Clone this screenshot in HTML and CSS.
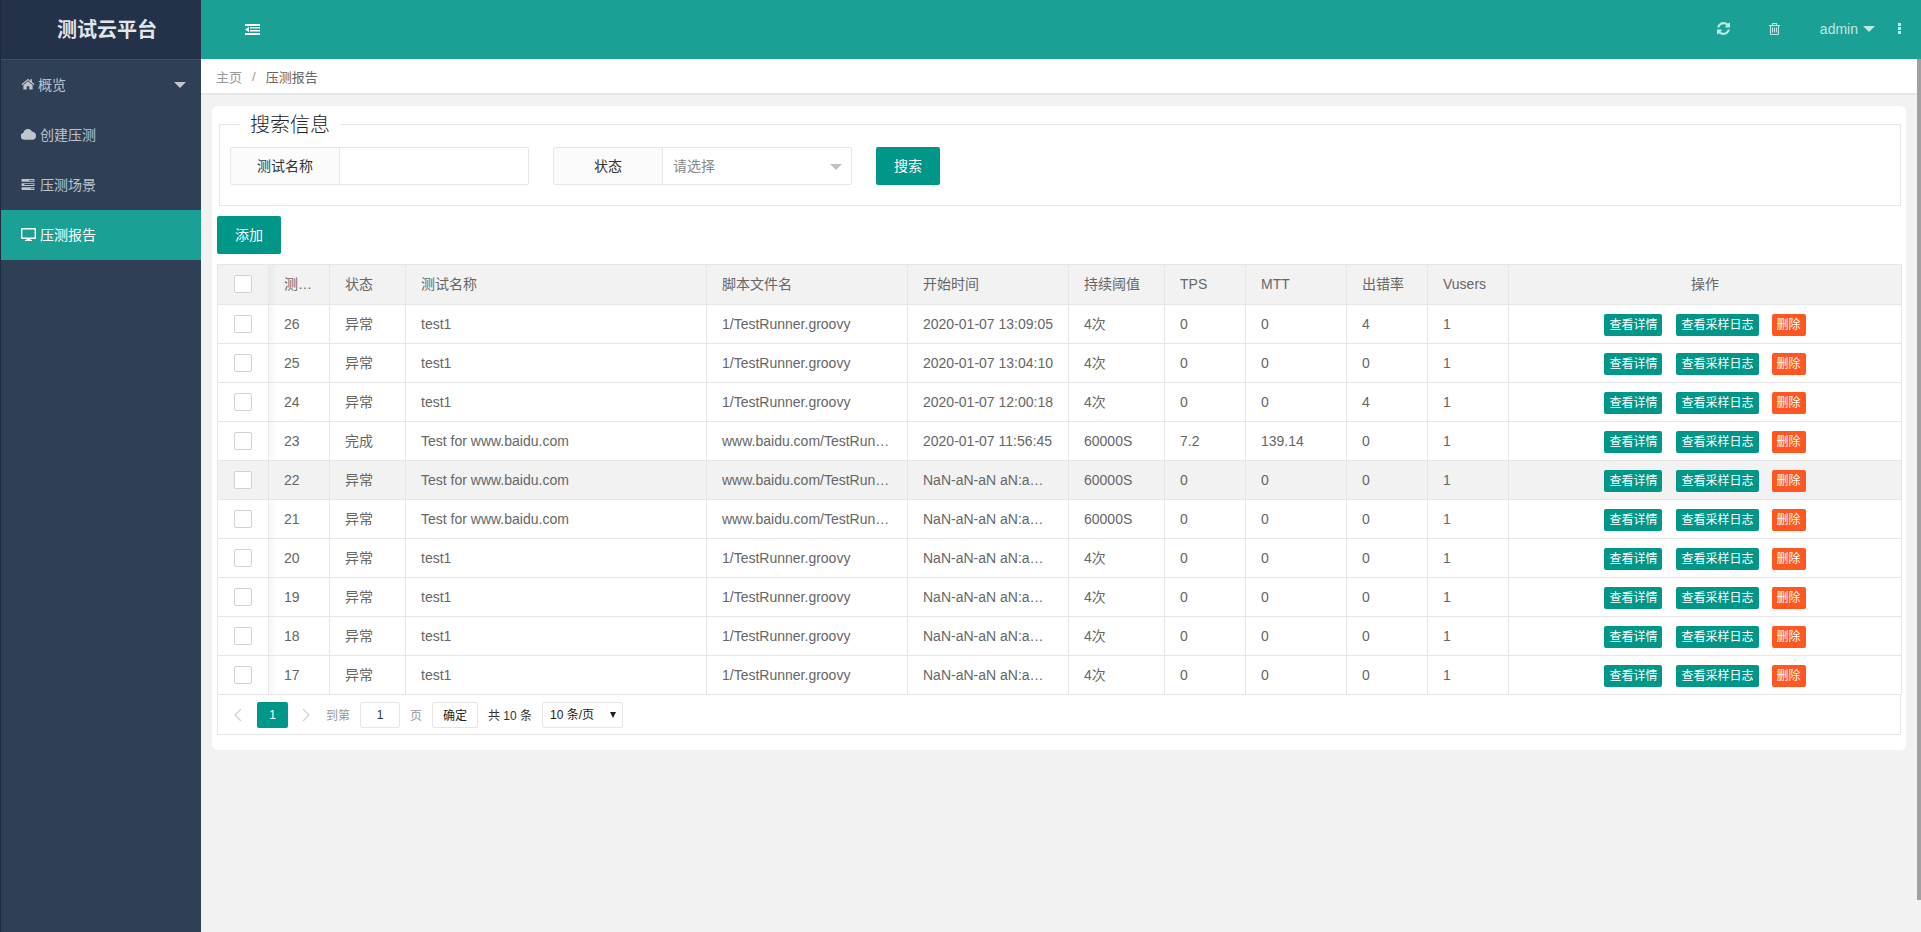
FILE: index.html
```html
<!DOCTYPE html>
<html lang="zh-CN">
<head>
<meta charset="utf-8">
<title>测试云平台</title>
<link rel="stylesheet" href="styles.css">
</head>
<body>
<div class="app">
  <aside class="sidebar">
    <div class="logo">测试云平台</div>
    <nav class="menu">
      <a class="menu-item">
        <svg class="mi mi-home" viewBox="0 0 16 14"><path d="M8 .8.4 7.4l.9 1L8 2.6l6.7 5.8.9-1-3-2.6V1.4h-2v2.2z"/><path d="M8 3.9 2.6 8.6v4.9h3.9V9.6h3v3.9h3.9V8.6z"/></svg>
        <span class="mt-home">概览</span>
        <i class="menu-caret"></i>
      </a>
      <a class="menu-item">
        <svg class="mi mi-wide" viewBox="0.4 0.5 15.200 11.200"><path d="M3.8 11.5A3.6 3.6 0 0 1 2.9 4.4 4.6 4.6 0 0 1 11.500 3 3.2 3.2 0 0 1 12.200 3.400 4.100 4.100 0 0 1 12 11.500z"/></svg>
        <span class="mt-wide">创建压测</span>
      </a>
      <a class="menu-item">
        <svg class="mi mi-bars" viewBox="0 0 14 12"><path d="M0 0h14v3H0zM0 4.500h14v3H0zM0 9h14v3H0z"/><path class="notch" d="M8 1h5v1H8zM3 5.500h10v1H3zM10 10h3v1h-3z"/></svg>
        <span class="mt-bars">压测场景</span>
      </a>
      <a class="menu-item active">
        <svg class="mi mi-wide" viewBox="0 0 15 13"><path fill-rule="evenodd" d="M1 0h13a1 1 0 0 1 1 1v9a1 1 0 0 1-1 1H9.500v1h1.500v1H4v-1h1.500v-1H1a1 1 0 0 1-1-1V1a1 1 0 0 1 1-1zm.4 1.400v8.200h12.200V1.400z"/></svg>
        <span class="mt-wide">压测报告</span>
      </a>
    </nav>
  </aside>

  <div class="main">
    <header class="topbar">
      <svg class="tb-outdent" viewBox="0 0 15 11"><path d="M0 0h15v2H0zM5 3h10v1.600H5zM5 6h10v1.600H5zM0 9h15v2H0zM4 2.800v5.400L0 5.500z"/></svg>
      <div class="tb-right">
        <svg class="tb-refresh" viewBox="0 0 1536 1536"><path d="M1511 928q0 5-1 7-64 268-268 434.500t-478 166.500q-146 0-282.500-55t-243.500-157l-129 129q-19 19-45 19t-45-19-19-45v-448q0-26 19-45t45-19h448q26 0 45 19t19 45-19 45l-137 137q71 66 161 102t187 36q134 0 250-65t186-179q11-17 53-117 8-23 30-23h192q13 0 22.500 9.500t9.500 22.500zm25-800v448q0 26-19 45t-45 19h-448q-26 0-45-19t-19-45 19-45l138-138q-148-137-349-137-134 0-250 65t-186 179q-11 17-53 117-8 23-30 23h-199q-13 0-22.500-9.500t-9.500-22.500v-7q65-268 270-434.500t480-166.500q146 0 284 55.500t245 156.500l130-129q19-19 45-19t45 19 19 45z"/></svg>
        <svg class="tb-trash" viewBox="0 0 11 12"><path d="M0 2.500h11M3.500 2.500V.5h4v2M1.500 2.500v8.200a.8.8 0 0 0 .8.800h6.400a.8.8 0 0 0 .8-.8V2.500M3.500 4.500v5M5.500 4.500v5M7.500 4.500v5"/></svg>
        <span class="tb-user">admin</span>
        <i class="tb-caret"></i>
        <span class="tb-kebab"><i></i><i></i><i></i></span>
      </div>
    </header>

    <div class="body-row">
      <div class="page">
        <div class="crumbs">
          <span class="crumb-link">主页</span>
          <span class="crumb-sep">/</span>
          <span class="crumb-now">压测报告</span>
        </div>
        <div class="content">
          <section class="card">
            <fieldset class="search">
              <legend>搜索信息</legend>
              <div class="search-row">
                <div class="field">
                  <label class="field-label">测试名称</label>
                  <input class="field-input" type="text">
                </div>
                <div class="field">
                  <label class="field-label">状态</label>
                  <div class="field-select">请选择<i class="select-tri"></i></div>
                </div>
                <button class="btn">搜索</button>
              </div>
            </fieldset>

            <button class="btn btn-add">添加</button>

            <table class="grid">
              <colgroup>
                <col class="c1"><col class="c2"><col class="c3"><col class="c4"><col class="c5"><col class="c6"><col class="c7"><col class="c8"><col class="c9"><col class="c10"><col class="c11"><col class="c12">
              </colgroup>
              <thead>
                <tr>
                  <th class="chk"><span class="box"></span></th>
                  <th class="sh">测试ID</th><th>状态</th><th>测试名称</th><th>脚本文件名</th><th>开始时间</th><th>持续阈值</th><th>TPS</th><th>MTT</th><th>出错率</th><th>Vusers</th><th class="ops">操作</th>
                </tr>
              </thead>
              <tbody>
                <tr><td class="chk"><span class="box"></span></td><td class="sh">26</td><td>异常</td><td>test1</td><td>1/TestRunner.groovy</td><td>2020-01-07 13:09:05</td><td>4次</td><td>0</td><td>0</td><td>4</td><td>1</td><td class="ops"><a class="xs">查看详情</a><a class="xs">查看采样日志</a><a class="xs xs-danger">删除</a></td></tr>
                <tr><td class="chk"><span class="box"></span></td><td class="sh">25</td><td>异常</td><td>test1</td><td>1/TestRunner.groovy</td><td>2020-01-07 13:04:10</td><td>4次</td><td>0</td><td>0</td><td>0</td><td>1</td><td class="ops"><a class="xs">查看详情</a><a class="xs">查看采样日志</a><a class="xs xs-danger">删除</a></td></tr>
                <tr><td class="chk"><span class="box"></span></td><td class="sh">24</td><td>异常</td><td>test1</td><td>1/TestRunner.groovy</td><td>2020-01-07 12:00:18</td><td>4次</td><td>0</td><td>0</td><td>4</td><td>1</td><td class="ops"><a class="xs">查看详情</a><a class="xs">查看采样日志</a><a class="xs xs-danger">删除</a></td></tr>
                <tr><td class="chk"><span class="box"></span></td><td class="sh">23</td><td>完成</td><td>Test for www.baidu.com</td><td>www.baidu.com/TestRunner.groovy</td><td>2020-01-07 11:56:45</td><td>60000S</td><td>7.2</td><td>139.14</td><td>0</td><td>1</td><td class="ops"><a class="xs">查看详情</a><a class="xs">查看采样日志</a><a class="xs xs-danger">删除</a></td></tr>
                <tr class="hover"><td class="chk"><span class="box"></span></td><td class="sh">22</td><td>异常</td><td>Test for www.baidu.com</td><td>www.baidu.com/TestRunner.groovy</td><td>NaN-aN-aN aN:aN:aN</td><td>60000S</td><td>0</td><td>0</td><td>0</td><td>1</td><td class="ops"><a class="xs">查看详情</a><a class="xs">查看采样日志</a><a class="xs xs-danger">删除</a></td></tr>
                <tr><td class="chk"><span class="box"></span></td><td class="sh">21</td><td>异常</td><td>Test for www.baidu.com</td><td>www.baidu.com/TestRunner.groovy</td><td>NaN-aN-aN aN:aN:aN</td><td>60000S</td><td>0</td><td>0</td><td>0</td><td>1</td><td class="ops"><a class="xs">查看详情</a><a class="xs">查看采样日志</a><a class="xs xs-danger">删除</a></td></tr>
                <tr><td class="chk"><span class="box"></span></td><td class="sh">20</td><td>异常</td><td>test1</td><td>1/TestRunner.groovy</td><td>NaN-aN-aN aN:aN:aN</td><td>4次</td><td>0</td><td>0</td><td>0</td><td>1</td><td class="ops"><a class="xs">查看详情</a><a class="xs">查看采样日志</a><a class="xs xs-danger">删除</a></td></tr>
                <tr><td class="chk"><span class="box"></span></td><td class="sh">19</td><td>异常</td><td>test1</td><td>1/TestRunner.groovy</td><td>NaN-aN-aN aN:aN:aN</td><td>4次</td><td>0</td><td>0</td><td>0</td><td>1</td><td class="ops"><a class="xs">查看详情</a><a class="xs">查看采样日志</a><a class="xs xs-danger">删除</a></td></tr>
                <tr><td class="chk"><span class="box"></span></td><td class="sh">18</td><td>异常</td><td>test1</td><td>1/TestRunner.groovy</td><td>NaN-aN-aN aN:aN:aN</td><td>4次</td><td>0</td><td>0</td><td>0</td><td>1</td><td class="ops"><a class="xs">查看详情</a><a class="xs">查看采样日志</a><a class="xs xs-danger">删除</a></td></tr>
                <tr><td class="chk"><span class="box"></span></td><td class="sh">17</td><td>异常</td><td>test1</td><td>1/TestRunner.groovy</td><td>NaN-aN-aN aN:aN:aN</td><td>4次</td><td>0</td><td>0</td><td>0</td><td>1</td><td class="ops"><a class="xs">查看详情</a><a class="xs">查看采样日志</a><a class="xs xs-danger">删除</a></td></tr>
              </tbody>
            </table>

            <div class="pager">
              <svg class="pg-arrow pg-prev" viewBox="0 0 9 14"><path d="M8 1 2 7l6 6"/></svg>
              <span class="pg-cur">1</span>
              <svg class="pg-arrow pg-next" viewBox="0 0 9 14"><path d="m1 1 6 6-6 6"/></svg>
              <span class="pg-text pg-goto">到第</span>
              <input class="pg-input" type="text" value="1">
              <span class="pg-text pg-unit">页</span>
              <button class="pg-ok">确定</button>
              <span class="pg-count">共 10 条</span>
              <span class="pg-size-wrap">
                <select class="pg-size"><option>10 条/页</option><option>20 条/页</option></select>
              </span>
            </div>
          </section>
        </div>
      </div>
      <div class="scroll-rail"><div class="scroll-thumb"></div></div>
    </div>
  </div>
</div>
</body>
</html>
```

FILE: styles.css
```css
* { box-sizing: border-box; }
html, body { margin: 0; padding: 0; height: 100%; overflow: hidden; }
body {
  font-family: "Liberation Sans", "Noto Sans CJK SC", sans-serif;
  font-size: 14px;
  color: #666;
  background: #f2f2f2;
}
.app { display: flex; height: 932px; width: 1921px; }

/* sidebar */
.sidebar {
  width: 201px;
  flex: none;
  background: #2f4056;
  border-left: 1px solid #1f2b3d;
}
.logo {
  height: 60px;
  line-height: 61px;
  padding-left: 56px;
  font-size: 20px;
  font-weight: 700;
  color: #e2e5ea;
  background: #233249;
  border-bottom: 1px solid #424f63;
}
.menu { display: flex; flex-direction: column; }
.menu-item {
  position: relative;
  display: flex;
  align-items: center;
  height: 50px;
  padding-left: 20px;
  padding-bottom: 2px;
  color: rgba(255, 255, 255, .7);
}
.menu-item svg { fill: currentColor; flex: none; }
.menu-item .notch { fill: #2f4056; }
.menu-item.active { background: #1aa094; color: #fff; }
.mi-home { width: 14px; height: 12px; margin-right: 3px; }
.mi-wide { width: 15px; height: 13px; margin-right: 4px; }
.mi-bars { width: 14px; height: 11px; margin-right: 4px; }
.mt-bars { margin-left: 1px; }
.menu-caret {
  position: absolute;
  left: 173px;
  top: 22px;
  border-style: solid;
  border-width: 6px 6px 0;
  border-color: rgba(255, 255, 255, .7) transparent transparent;
}

/* main */
.main { flex: 1; min-width: 0; display: flex; flex-direction: column; }
.topbar {
  height: 59px;
  flex: none;
  display: flex;
  align-items: center;
  background: #1aa094;
  color: rgba(255, 255, 255, .75);
}
.tb-outdent { width: 15px; height: 11px; margin-left: 44px; fill: #fff; }
.tb-right { margin-left: auto; display: flex; align-items: center; padding: 0 20px 2px 0; }
.tb-refresh { width: 13px; height: 13px; fill: currentColor; }
.tb-trash { width: 11px; height: 12px; margin-left: 39px; fill: none; stroke: currentColor; stroke-width: 1.1; }
.tb-user { margin-left: 40px; }
.tb-caret {
  margin-left: 5px;
  border-style: solid;
  border-width: 6px 6px 0;
  border-color: rgba(255, 255, 255, .75) transparent transparent;
}
.tb-kebab { margin-left: 23px; display: flex; flex-direction: column; gap: 1px; }
.tb-kebab i { display: block; width: 3px; height: 3px; background: rgba(255, 255, 255, .75); }

.body-row { flex: 1; display: flex; min-height: 0; }
.page { flex: 1; min-width: 0; display: flex; flex-direction: column; }
.scroll-rail { width: 4px; flex: none; }
.scroll-thumb { height: 841px; background: #a0a0a3; }

.crumbs {
  height: 36px;
  flex: none;
  display: flex;
  align-items: center;
  padding-left: 15px;
  font-size: 13px;
  background: #fff;
  border-bottom: 2px solid #e6e6e6;
}
.crumb-link { color: #999; }
.crumb-sep { color: #999; margin: 0 10px; }
.crumb-now { color: #666; }

.content { flex: 1; padding: 11px 11px 0 11px; }
.card {
  background: #fff;
  border-radius: 6px;
  padding: 4px 5px 15px;
}

/* search */
.search {
  margin: 0 0 0 2px;
  padding: 9px 10px 20px;
  border: 1px solid #e6e6e6;
  min-width: 0;
}
.search legend {
  margin-left: 10px;
  padding: 2px 10px 0;
  font-size: 20px;
  line-height: 26px;
  font-weight: 300;
  color: #222;
}
.search-row { display: flex; gap: 24px; }
.field { display: flex; width: 299px; height: 38px; }
.field-label {
  width: 110px;
  flex: none;
  line-height: 36px;
  text-align: center;
  color: #333;
  background: #fbfbfb;
  border: 1px solid #e6e6e6;
  border-radius: 2px 0 0 2px;
}
.field-input, .field-select {
  flex: 1;
  min-width: 0;
  height: 38px;
  margin: 0 0 0 -1px;
  padding: 0 10px;
  border: 1px solid #e6e6e6;
  border-radius: 0 2px 2px 0;
  background: #fff;
  outline: 0;
}
.field-select { position: relative; line-height: 36px; color: #888; }
.select-tri {
  position: absolute;
  right: 9px;
  top: 16px;
  border-style: solid;
  border-width: 6px 6px 0;
  border-color: #c2c2c2 transparent transparent;
}
.btn {
  display: block;
  width: 64px;
  height: 38px;
  padding: 0;
  border: 0;
  border-radius: 2px;
  background: #009688;
  color: #fff;
  font: inherit;
  line-height: 38px;
  text-align: center;
}
.btn-add { margin-top: 10px; }

/* table */
.grid {
  width: 1684px;
  margin-top: 10px;
  table-layout: fixed;
  border-collapse: collapse;
  background: #fff;
}
.c1 { width: 51px; } .c2 { width: 61px; } .c3 { width: 76px; } .c4 { width: 301px; }
.c5 { width: 201px; } .c6 { width: 161px; } .c7 { width: 96px; } .c8 { width: 81px; }
.c9 { width: 101px; } .c10 { width: 81px; } .c11 { width: 81px; } .c12 { width: 393px; }
.grid th, .grid td {
  height: 39px;
  padding: 0 15px;
  border: 1px solid #e6e6e6;
  line-height: 20px;
  font-weight: 400;
  color: #666;
  text-align: left;
  white-space: nowrap;
  overflow: hidden;
  text-overflow: ellipsis;
}
.grid th { height: 40px; padding-bottom: 2px; background: #f2f2f2; }
.grid .hover td { background: #f2f2f2; }
.grid .sh { background-image: linear-gradient(90deg, rgba(0, 0, 0, .035), rgba(0, 0, 0, 0) 7px); }
.grid .chk { padding: 0 0 0 16px; text-overflow: clip; }
.grid th.chk { padding-bottom: 2px; }
.grid .ops { text-align: center; padding: 0 0 2px; }
.grid td.ops { padding: 2px 0 0; }
.box {
  display: block;
  width: 18px;
  height: 18px;
  background: #fff;
  border: 1px solid #d2d2d2;
  border-radius: 2px;
}
.xs {
  display: inline-block;
  height: 22px;
  line-height: 22px;
  padding: 0 5px;
  margin-left: 14px;
  font-size: 12px;
  color: #fff;
  background: #009688;
  border-radius: 2px;
  vertical-align: middle;
}
.xs:first-child { margin-left: 0; }
.xs-danger { background: #ff5722; margin-left: 13px; }

/* pager */
.pager {
  display: flex;
  align-items: center;
  width: 1684px;
  height: 40px;
  font-size: 12px;
  border: 1px solid #e6e6e6;
  border-top: 0;
}
.pg-arrow { width: 9px; height: 14px; fill: none; stroke: #d2d2d2; stroke-width: 1.3; flex: none; }
.pg-prev { margin-left: 15px; }
.pg-next { margin-left: 14px; }
.pg-cur {
  width: 31px;
  height: 26px;
  margin-left: 15px;
  line-height: 26px;
  text-align: center;
  color: #fff;
  background: #009688;
  border-radius: 2px;
}
.pg-text { color: #999; }
.pg-goto { margin-left: 15px; }
.pg-unit { margin-left: 10px; }
.pg-input {
  width: 40px;
  height: 26px;
  margin: 0 0 0 10px;
  padding: 0;
  text-align: center;
  font: inherit;
  color: #333;
  border: 1px solid #e6e6e6;
  border-radius: 2px;
  outline: 0;
}
.pg-ok {
  width: 46px;
  height: 26px;
  margin-left: 10px;
  padding: 0;
  font: inherit;
  color: #222;
  background: #fff;
  border: 1px solid #e6e6e6;
  border-radius: 2px;
}
.pg-count { margin-left: 10px; color: #333; }
.pg-size-wrap { position: relative; display: block; width: 81px; height: 26px; margin-left: 10px; }
.pg-size-wrap::after {
  content: "";
  position: absolute;
  left: 68px;
  top: 10px;
  border-style: solid;
  border-width: 6px 3.5px 0;
  border-color: #222 transparent transparent;
  pointer-events: none;
}
.pg-size {
  display: block;
  width: 81px;
  height: 26px;
  padding: 0 0 0 7px;
  font: inherit;
  color: #222;
  background: #fff;
  border: 1px solid #e6e6e6;
  border-radius: 2px;
  outline: 0;
  appearance: none;
}
```
